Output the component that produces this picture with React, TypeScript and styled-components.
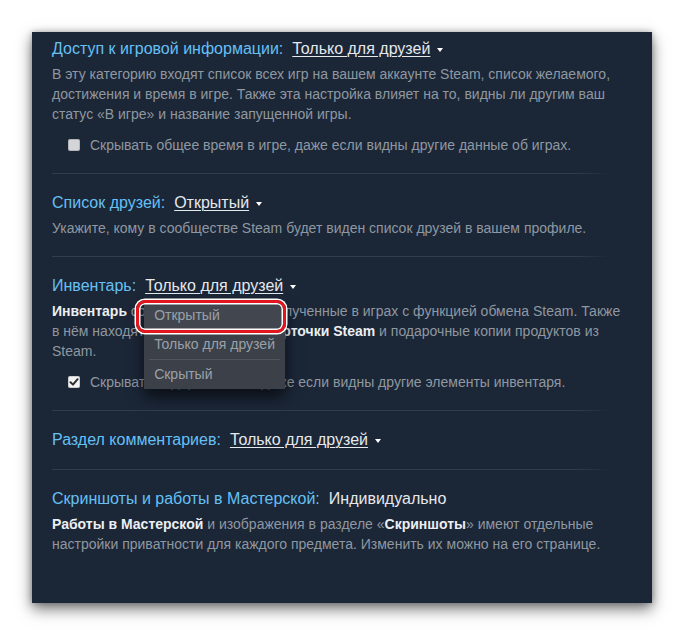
import React from "react";
import styled, { createGlobalStyle } from "styled-components";

const GlobalStyle = createGlobalStyle`
  html, body { margin: 0; padding: 0; background: #ffffff; }
  body { font-family: "Liberation Sans", Arial, sans-serif; }
`;

const Page = styled.div`
  width: 684px;
  height: 636px;
  box-sizing: border-box;
  padding: 32px 0 0 32px;
  overflow: hidden;
`;

const Panel = styled.div`
  width: 620px;
  height: 571px;
  box-sizing: border-box;
  padding: 0 20px;
  background: #1b2637;
  box-shadow: 0 6px 14px rgba(0, 0, 0, 0.55), 0 0 6px rgba(0, 0, 0, 0.25);
`;

const Section = styled.div<{ $first?: boolean }>`
  padding: ${(p) => (p.$first ? "6px" : "18px")} 0 18px;
`;

const Divider = styled.div`
  width: 558px;
  height: 1px;
  background: linear-gradient(to right, #313d4d 0, #313d4d 94%, rgba(49, 61, 77, 0) 100%);
`;

const TitleRow = styled.div`
  display: flex;
  align-items: center;
  height: 22px;
  font-size: 16px;
  line-height: 22px;
`;

const Label = styled.span`
  color: #66c0f4;
  margin-right: 9px;
`;

const DropdownWrap = styled.span`
  position: relative;
  display: inline-flex;
  align-items: center;
`;

const Value = styled.span<{ $link?: boolean }>`
  color: #e6e9ec;
  text-decoration: ${(p) => (p.$link ? "underline" : "none")};
  text-underline-offset: 2px;
  text-decoration-thickness: 1px;
`;

const Caret = styled.span`
  display: inline-block;
  width: 0;
  height: 0;
  margin-left: 7px;
  margin-top: 2px;
  border-left: 3.5px solid transparent;
  border-right: 3.5px solid transparent;
  border-top: 4px solid #ffffff;
`;

const Desc = styled.div`
  margin-top: 4px;
  font-size: 14px;
  line-height: 20px;
  color: #8f98a0;
`;

const Strong = styled.span`
  color: #eceff1;
  font-weight: 700;
`;

const CheckRow = styled.label`
  display: flex;
  align-items: center;
  margin-top: 11px;
  padding-left: 16px;
  height: 20px;
  font-size: 14px;
  line-height: 20px;
  color: #8f98a0;
`;

const Box = styled.span<{ $checked?: boolean }>`
  display: inline-flex;
  align-items: center;
  justify-content: center;
  width: 12px;
  height: 12px;
  margin-right: 10px;
  border-radius: 2px;
  background: ${(p) => (p.$checked ? "#f2f2f2" : "#d3d5d8")};
  box-shadow: inset 0 0 0 1px rgba(0, 0, 0, 0.15);
`;

const Menu = styled.div`
  position: absolute;
  left: -1px;
  top: 26px;
  width: 141px;
  z-index: 5;
  background: #3b4049;
  box-shadow: 0 8px 14px rgba(0, 0, 0, 0.6);
  font-size: 14px;
  line-height: 29px;
`;

const MenuItem = styled.div<{ $active?: boolean; $sep?: boolean }>`
  height: 29px;
  color: #9aa0a7;
  white-space: nowrap;
  background: ${(p) => (p.$active ? "#42474f" : "transparent")};
  border-top: ${(p) => (p.$sep ? "1px solid #50565e" : "none")};
  margin: ${(p) => (p.$sep ? "0 5px" : "0")};
  padding: 0 10px 0 ${(p) => (p.$sep ? "5px" : "10px")};
`;

const Highlight = styled.div`
  position: absolute;
  left: -8px;
  top: -1px;
  width: 144px;
  height: 27px;
  border: 3.5px solid #e3161d;
  border-radius: 9px;
  box-shadow: 0 0 0 1.5px #ffffff, inset 0 0 0 1.5px #ffffff;
  pointer-events: none;
`;

const Check = () => (
  <svg width="10" height="10" viewBox="0 0 10 10">
    <path d="M1.5 5.2 L4 7.6 L8.6 2.2" fill="none" stroke="#2a2e33" strokeWidth="2" strokeLinecap="round" strokeLinejoin="round" />
  </svg>
);

type DDProps = { value: string; children?: React.ReactNode };

const Dropdown = ({ value, children }: DDProps) => (
  <DropdownWrap>
    <Value $link>{value}</Value>
    <Caret />
    {children}
  </DropdownWrap>
);

export default function App() {
  return (
    <>
      <GlobalStyle />
      <Page>
        <Panel>
          <Section $first>
            <TitleRow>
              <Label>Доступ к игровой информации:</Label>
              <Dropdown value="Только для друзей" />
            </TitleRow>
            <Desc>
              В эту категорию входят список всех игр на вашем аккаунте Steam, список желаемого,
              достижения и время в игре. Также эта настройка влияет на то, видны ли другим ваш
              статус «В игре» и название запущенной игры.
            </Desc>
            <CheckRow>
              <Box />
              Скрывать общее время в игре, даже если видны другие данные об играх.
            </CheckRow>
          </Section>
          <Divider />

          <Section>
            <TitleRow>
              <Label>Список друзей:</Label>
              <Dropdown value="Открытый" />
            </TitleRow>
            <Desc>Укажите, кому в сообществе Steam будет виден список друзей в вашем профиле.</Desc>
          </Section>
          <Divider />

          <Section>
            <TitleRow>
              <Label>Инвентарь:</Label>
              <Dropdown value="Только для друзей">
                <Menu>
                  <MenuItem $active>Открытый</MenuItem>
                  <MenuItem>Только для друзей</MenuItem>
                  <MenuItem $sep>Скрытый</MenuItem>
                  <Highlight />
                </Menu>
              </Dropdown>
            </TitleRow>
            <Desc>
              <Strong>Инвентарь</Strong> содержит предметы, полученные в играх с функцией обмена Steam. Также
              <br />
              в нём находятся коллекционные <Strong>карточки Steam</Strong> и подарочные копии продуктов из
              Steam.
            </Desc>
            <CheckRow>
              <Box $checked>
                <Check />
              </Box>
              Скрывать подарки Steam, даже если видны другие элементы инвентаря.
            </CheckRow>
          </Section>
          <Divider />

          <Section>
            <TitleRow>
              <Label>Раздел комментариев:</Label>
              <Dropdown value="Только для друзей" />
            </TitleRow>
          </Section>
          <Divider />

          <Section>
            <TitleRow>
              <Label>Скриншоты и работы в Мастерской:</Label>
              <Value>Индивидуально</Value>
            </TitleRow>
            <Desc>
              <Strong>Работы в Мастерской</Strong> и изображения в разделе «<Strong>Скриншоты</Strong>» имеют отдельные
              <br />
              настройки приватности для каждого предмета. Изменить их можно на его странице.
            </Desc>
          </Section>
        </Panel>
      </Page>
    </>
  );
}
